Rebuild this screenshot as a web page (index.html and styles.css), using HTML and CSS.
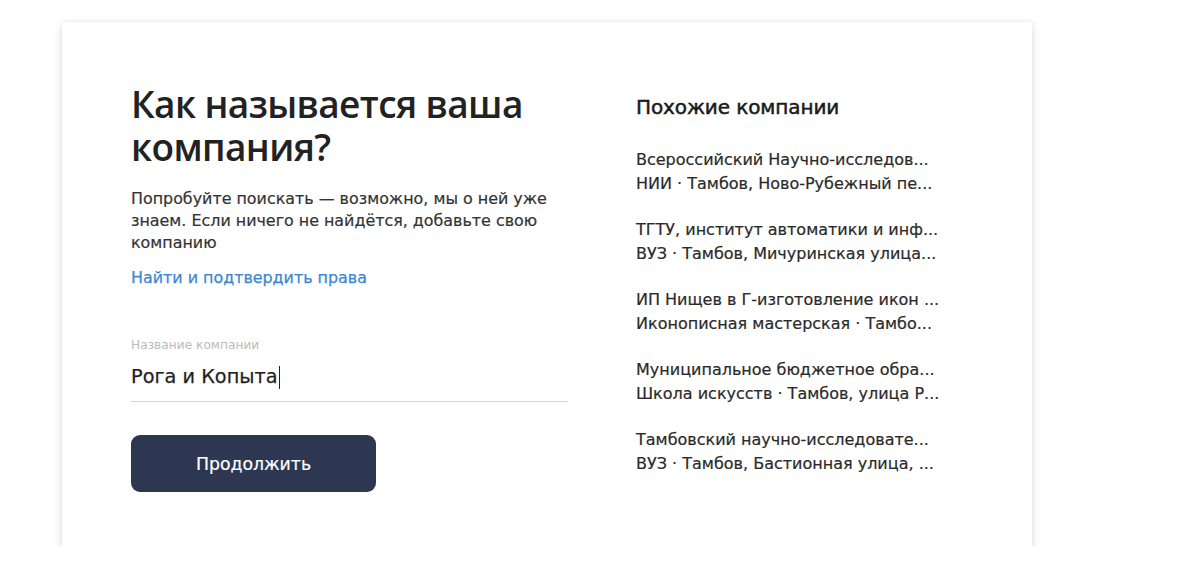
FILE: index.html
```html
<!DOCTYPE html>
<html lang="ru">
<head>
<meta charset="utf-8">
<link rel="stylesheet" href="styles.css">
</head>
<body>
<div class="page">
  <div class="card">
    <div class="main">
      <h1 class="title">Как называется ваша компания?</h1>
      <p class="hint">Попробуйте поискать — возможно, мы о ней уже знаем. Если ничего не найдётся, добавьте свою компанию</p>
      <a class="link" href="#">Найти и подтвердить права</a>
      <div class="field">
        <div class="label">Название компании</div>
        <div class="value">Рога и Копыта<span class="caret"></span></div>
      </div>
      <button class="btn">Продолжить</button>
    </div>
    <div class="side">
      <h2 class="side-title">Похожие компании</h2>
      <ul class="list">
        <li><div class="row">Всероссийский Научно-исследов...</div><div class="row">НИИ · Тамбов, Ново-Рубежный пе...</div></li>
        <li><div class="row">ТГТУ, институт автоматики и инф...</div><div class="row">ВУЗ · Тамбов, Мичуринская улица...</div></li>
        <li><div class="row">ИП Нищев в Г-изготовление икон ...</div><div class="row">Иконописная мастерская · Тамбо...</div></li>
        <li><div class="row">Муниципальное бюджетное обра...</div><div class="row">Школа искусств · Тамбов, улица Р...</div></li>
        <li><div class="row">Тамбовский научно-исследовате...</div><div class="row">ВУЗ · Тамбов, Бастионная улица, ...</div></li>
      </ul>
    </div>
  </div>
</div>
</body>
</html>
```

FILE: styles.css
```css
* { box-sizing: border-box; }
html, body { margin: 0; padding: 0; background: #fff; }
body { font-family: "DejaVu Sans", "Noto Sans", sans-serif; color: #222; }
.page { padding: 22px 0 0 62px; }
.card {
  width: 970px;
  height: 525px;
  background: #fff;
  box-shadow: 0 3px 10px rgba(0,0,0,0.11), 0 0 4px rgba(0,0,0,0.07);
  display: flex;
  padding: 60px 0 0 69px;
  gap: 68px;
}
.main { width: 437px; display: flex; flex-direction: column; align-items: flex-start; }
.title { margin: 0; font-family: "Open Sans", sans-serif; font-size: 37px; font-weight: 600; line-height: 43px; letter-spacing: -0.6px; color: #222; }
.hint { margin: 20px 0 0; font-size: 15.9px; line-height: 22px; color: #333; width: 437px; -webkit-text-stroke: 0.2px #333; }
.link { margin-top: 13px; font-size: 15.9px; line-height: 22px; color: #3b87d2; text-decoration: none; -webkit-text-stroke: 0.25px #3b87d2; }
.field { margin-top: 49px; width: 437px; border-bottom: 1.5px solid #d6d6d6; padding-bottom: 11px; }
.label { font-size: 12.2px; line-height: 14px; color: #bbb; }
.value { margin-top: 12px; font-size: 19.3px; line-height: 26px; color: #222; display: flex; align-items: center; -webkit-text-stroke: 0.25px #222; }
.caret { display: inline-block; width: 1.5px; height: 23px; background: #222; margin-left: 1px; }
.btn {
  margin-top: 33px;
  width: 245px;
  height: 57px;
  border: none;
  border-radius: 9px;
  background: #2d3752;
  color: #fff;
  font-family: inherit;
  font-size: 17.3px;
  -webkit-text-stroke: 0.2px #fff;
}
.side { width: 320px; padding-top: 13px; }
.side-title { margin: 0; font-size: 20px; font-weight: normal; line-height: 24px; color: #1a1a1a; letter-spacing: -0.1px; -webkit-text-stroke: 0.5px #1a1a1a; }
.list { list-style: none; margin: 29px 0 0; padding: 0; display: flex; flex-direction: column; gap: 22px; }
.list li { display: flex; flex-direction: column; }
.row { font-size: 16px; line-height: 24px; color: #2a2a2a; white-space: nowrap; -webkit-text-stroke: 0.2px #2a2a2a; }
```
